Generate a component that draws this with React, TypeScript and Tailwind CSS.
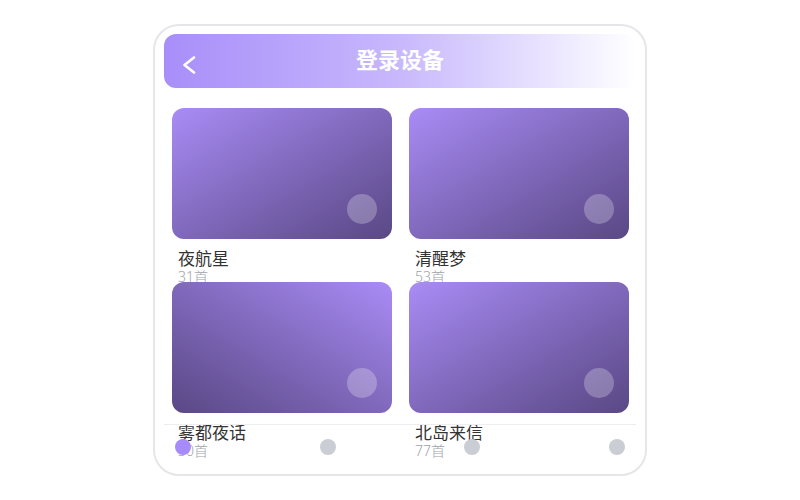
type Album = { name: string; count: string; flip?: boolean };

const albums: Album[] = [
  { name: "夜航星", count: "31首" },
  { name: "清醒梦", count: "53首" },
  { name: "雾都夜话", count: "30首", flip: true },
  { name: "北岛来信", count: "77首" },
];

function AlbumCard({ album }: { album: Album }) {
  return (
    <div className="relative">
      <div
        className={
          album.flip
            ? "relative h-[131px] rounded-[12px] bg-linear-to-bl from-[#a98cf6] to-[#5a4885]"
            : "relative h-[131px] rounded-[12px] bg-linear-to-br from-[#a98cf6] to-[#5a4885]"
        }
      >
        <div className="absolute right-[15px] bottom-[15px] h-[30px] w-[30px] rounded-full bg-white/25" />
      </div>
      <div className="mt-[10px] pl-[6px]">
        <p className="text-[17px] leading-[20px] text-[#333]">{album.name}</p>
        <p className="text-[14px] leading-[16px] font-light text-[#a0a4ab]">{album.count}</p>
      </div>
    </div>
  );
}

export default function App() {
  return (
    <div
      className="flex h-[500px] w-[800px] items-start justify-center bg-white pt-[24px]"
      style={{ fontFamily: '"Noto Sans", "Noto Sans CJK SC", sans-serif' }}
    >
      <div className="relative h-[452px] w-[494px] overflow-hidden rounded-[26px] border-2 border-[#e6e6ea] bg-white px-[9px] pt-[8px]">
        {/* header */}
        <div className="relative flex h-[54px] items-center justify-center rounded-[12px] bg-linear-to-r from-[#a88ef9] via-[#c8b8fc] to-white">
          <svg className="absolute left-[18px] top-[22px]" width="14" height="18" viewBox="0 0 14 18" fill="none">
            <polyline points="12,1.5 2.5,9 12,16.5" stroke="white" strokeWidth="2.6" strokeLinecap="round" strokeLinejoin="round" />
          </svg>
          <h1 className="-mt-[4px] text-[22px] font-bold leading-none text-white">登录设备</h1>
        </div>

        {/* albums */}
        <div className="mt-[20px] grid grid-cols-2 gap-x-[17px] auto-rows-[162px] gap-y-[12px] pl-[8px] pr-[7px]">
          {albums.map((a) => (
            <AlbumCard key={a.name} album={a} />
          ))}
        </div>

        {/* tab bar */}
        <div className="absolute left-[9px] right-[9px] bottom-[9px] flex h-[41px] items-start justify-between border-t border-[#eeeef0] px-[11px] pt-[14px]">
          <span className="h-[16px] w-[16px] rounded-full bg-[#a78bfa]" />
          <span className="h-[16px] w-[16px] rounded-full bg-[#cacdd3]" />
          <span className="h-[16px] w-[16px] rounded-full bg-[#cacdd3]" />
          <span className="h-[16px] w-[16px] rounded-full bg-[#cacdd3]" />
        </div>
      </div>
    </div>
  );
}
